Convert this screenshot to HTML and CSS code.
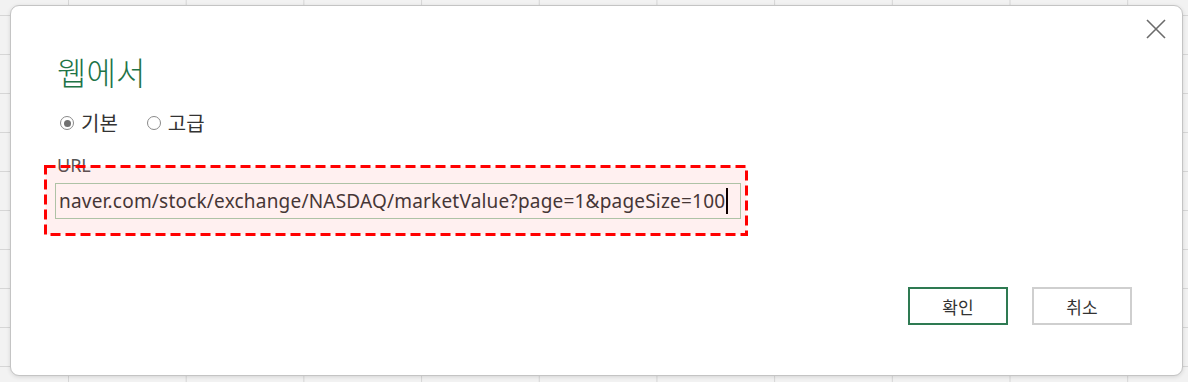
FILE: index.html
```html
<!DOCTYPE html>
<html lang="ko">
<head>
    <meta charset="UTF-8">
    <meta name="viewport" content="width=device-width, initial-scale=1.0">
    <title>웹에서</title>
    <link rel="stylesheet" href="styles.css">
</head>
<body>
    <div class="dialog">
        <div class="dialog-top">
            <button class="close-btn" aria-label="닫기">
                <svg width="20" height="20" viewBox="0 0 20 20">
                    <path d="M1 1 L19 19 M19 1 L1 19" stroke="#6b6b6b" stroke-width="1.6" fill="none"/>
                </svg>
            </button>
        </div>

        <h1 class="title">웹에서</h1>

        <div class="mode-row">
            <label class="radio"><input type="radio" name="mode" checked> 기본</label>
            <label class="radio"><input type="radio" name="mode"> 고급</label>
        </div>

        <div class="field">
            <label class="field-label" for="url-input">URL</label>
            <div class="url-box" id="url-input">naver.com/stock/exchange/NASDAQ/marketValue?page=1&amp;pageSize=100<span class="caret"></span></div>
            <svg class="highlight" width="704" height="71" viewBox="0 0 704 71">
                <rect x="1.5" y="1.5" width="701" height="68" fill="rgba(255,0,0,0.06)" stroke="#ff0000" stroke-width="3" stroke-dasharray="10 5"/>
            </svg>
        </div>

        <div class="actions">
            <button class="btn btn-primary">확인</button>
            <button class="btn">취소</button>
        </div>
    </div>
</body>
</html>
```

FILE: styles.css
```css
:root {
    --green: #217346;
    --text: #333;
    --grid: #d6d6d6;
    --sheet: #f2f2f2;
}

body {
    margin: 0;
    height: 382px;
    overflow: hidden;
    font-family: "Noto Sans", "Noto Sans CJK KR", sans-serif;
    color: var(--text);
    background-color: var(--sheet);
    background-image:
        linear-gradient(to right, var(--grid) 1px, transparent 1px),
        linear-gradient(to bottom, var(--grid) 1px, transparent 1px);
    background-size: 117.7px 39px;
    background-position: 68px 15px;
}

.dialog {
    box-sizing: border-box;
    width: 1173px;
    height: 371px;
    margin: 5px 0 0 10px;
    background: #fff;
    border: 1px solid #c4c4c4;
    border-radius: 9px;
    box-shadow: 0 1px 4px rgba(0,0,0,0.12);
    display: flex;
    flex-direction: column;
    padding: 0 50px 0 46px;
}

.dialog-top {
    display: flex;
    justify-content: flex-end;
    margin: 13px -34px 0 0;
}

.close-btn {
    background: none;
    border: none;
    padding: 0;
    width: 20px;
    height: 20px;
    cursor: pointer;
}

.title {
    margin: 14px 0 0;
    font-family: "Noto Sans CJK KR", sans-serif;
    font-weight: 300;
    font-size: 32px;
    line-height: 36px;
    color: var(--green);
}

.mode-row {
    display: flex;
    gap: 29px;
    margin: 22px 0 0 3px;
    font-family: "Noto Sans CJK KR", sans-serif;
    font-size: 20px;
    line-height: 24px;
}

.radio {
    display: flex;
    align-items: center;
    gap: 7px;
}

.radio input {
    appearance: none;
    margin: 0;
    width: 14px;
    height: 14px;
    border: 1px solid #8a8a8a;
    border-radius: 50%;
    box-sizing: border-box;
    display: grid;
    place-items: center;
}

.radio input:checked::after {
    content: "";
    width: 7px;
    height: 7px;
    border-radius: 50%;
    background: #707070;
}

.field {
    position: relative;
    margin-top: 20px;
    width: 684px;
}

.field-label {
    display: block;
    font-size: 18px;
    line-height: 20px;
    color: #555;
}

.url-box {
    margin: 8px 0 0 -2px;
    height: 36px;
    box-sizing: border-box;
    border: 1px solid #a9cfb1;
    padding: 0 0 0 3px;
    display: flex;
    align-items: center;
    font-size: 19px;
    letter-spacing: 0.2px;
    color: #3a3a3a;
    white-space: nowrap;
}

.caret {
    display: inline-block;
    width: 2px;
    height: 26px;
    margin-left: 1px;
    background: #000;
}

.highlight {
    position: absolute;
    left: -13px;
    top: 10px;
}

.actions {
    display: flex;
    justify-content: flex-end;
    gap: 24px;
    margin: auto 0 50px;
}

.btn {
    width: 100px;
    height: 38px;
    background: #fff;
    border: 2px solid #cfcfcf;
    font-family: "Noto Sans CJK KR", sans-serif;
    font-size: 17px;
    color: var(--text);
    cursor: pointer;
}

.btn-primary {
    border-color: #2e7a52;
}
```
